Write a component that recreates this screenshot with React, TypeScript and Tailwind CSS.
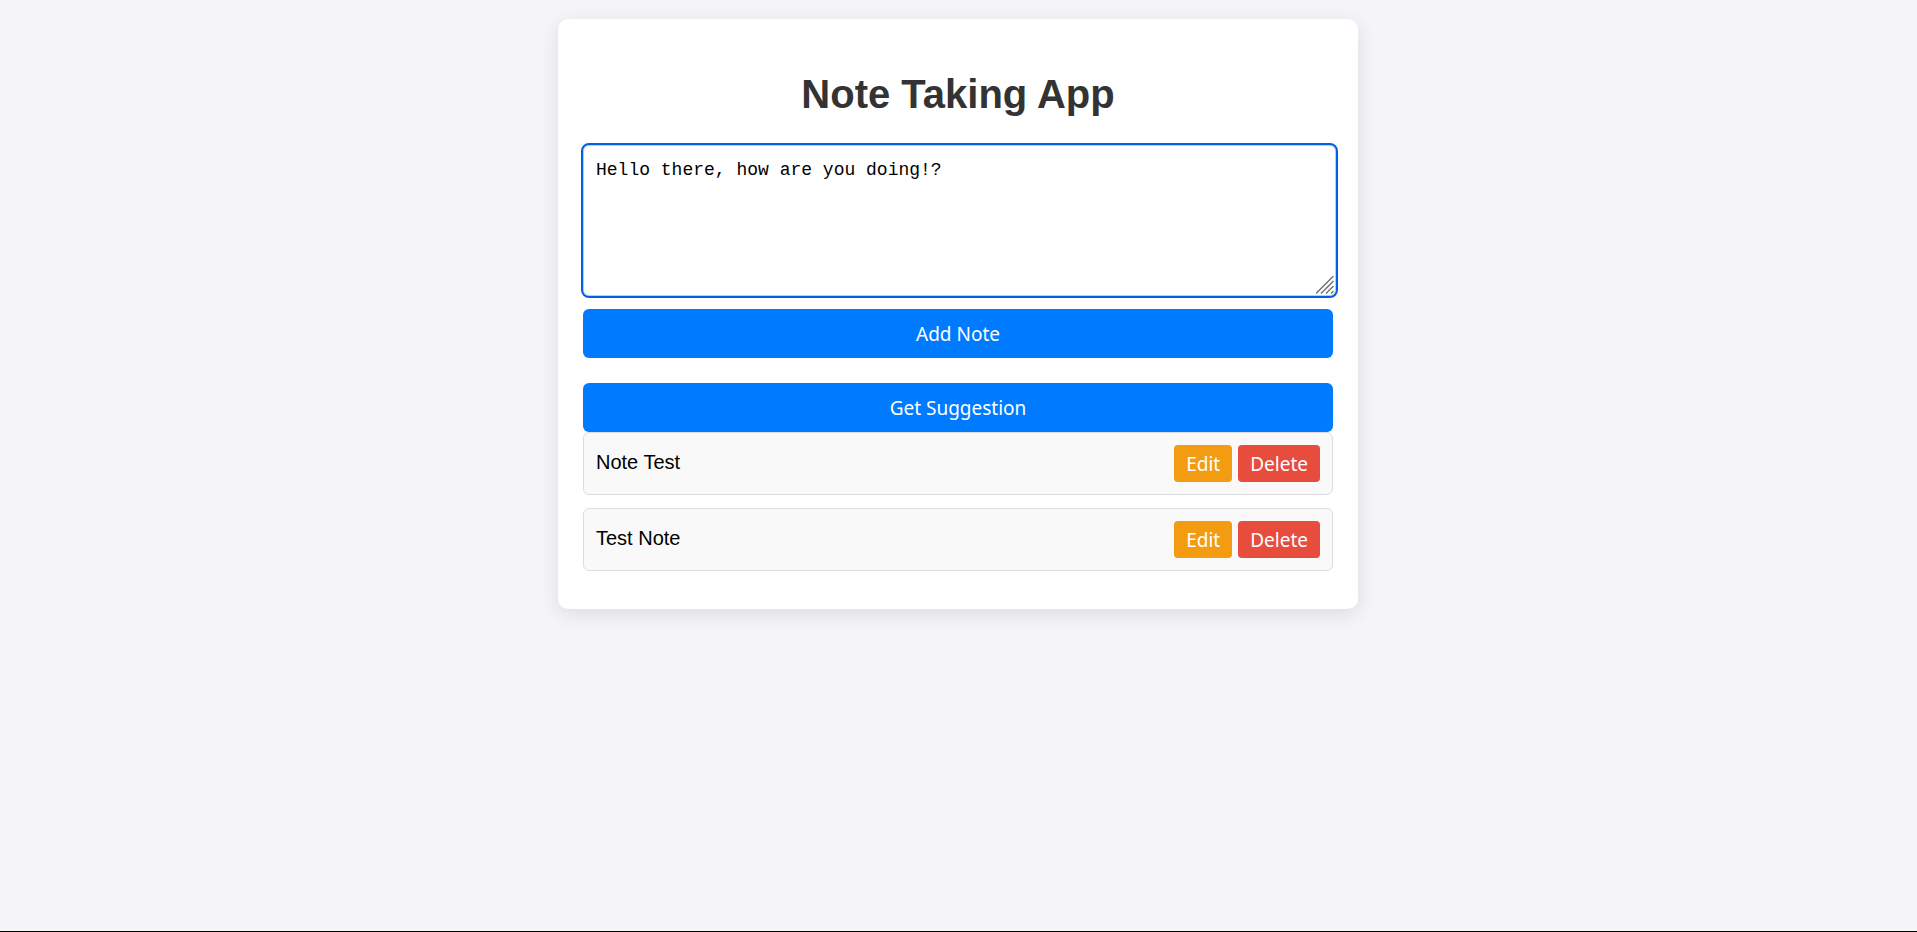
import { useState } from "react";

const initialNotes = ["Note Test", "Test Note"];

const primaryButton =
  "block h-[49px] w-full cursor-pointer rounded-md bg-[#007bff] font-['Noto_Sans',sans-serif] text-[19px] leading-6 text-white";
const smallButton =
  "h-[37px] cursor-pointer rounded px-3 font-['Noto_Sans',sans-serif] text-[19px] leading-6 text-white";

export default function App() {
  const [notes, setNotes] = useState(initialNotes);
  const [draft, setDraft] = useState("Hello there, how are you doing!?");

  return (
    <div className="min-h-screen border-b border-black bg-[#f4f4f9] pt-[19px] pr-px font-['Liberation_Sans',Arial,sans-serif] text-xl text-black">
      <main className="mx-auto max-w-[800px] rounded-[10px] bg-white px-[25px] pt-[52px] pb-[38px] shadow-[0_5px_19px_rgba(0,0,0,0.1)]">
        <h1 className="text-center text-[40px] leading-[46px] font-bold text-[#333]">Note Taking App</h1>
        <div className="relative mt-7 -mr-[3px]">
          <textarea
            aria-label="Note"
            value={draft}
            onChange={(e) => setDraft(e.target.value)}
            className="block h-[151px] w-full resize-none rounded-md border border-[#ccc] bg-white p-3 font-['Liberation_Mono',monospace] text-lg leading-6 outline-2 outline-[#0060e6]"
          />
          <svg
            aria-hidden="true"
            viewBox="0 0 18 18"
            className="pointer-events-none absolute right-[2px] bottom-[2px] size-[18px]"
            fill="none"
            stroke="#6b6b6b"
            strokeWidth="1.3"
          >
            <path d="M0 17.5 17.5 0M5 17.5 17.5 5M10 17.5 17.5 10M15 17.5 17.5 15" />
          </svg>
        </div>
        <button
          type="button"
          className={`mt-[13px] ${primaryButton}`}
          onClick={() => draft && setNotes([...notes, draft])}
        >
          Add Note
        </button>
        <button type="button" className={`mt-[25px] ${primaryButton}`}>
          Get Suggestion
        </button>
        <ul className="flex flex-col gap-[13px]">
          {notes.map((note, i) => (
            <li
              key={i}
              className="flex items-start justify-between rounded-md border border-[#ddd] bg-[#f9f9f9] p-3 leading-[35px]"
            >
              <span>{note}</span>
              <div className="flex gap-[6px]">
                <button type="button" className={`bg-[#f39c12] ${smallButton}`} onClick={() => setDraft(note)}>
                  Edit
                </button>
                <button
                  type="button"
                  className={`bg-[#e74c3c] ${smallButton}`}
                  onClick={() => setNotes(notes.filter((_, j) => j !== i))}
                >
                  Delete
                </button>
              </div>
            </li>
          ))}
        </ul>
      </main>
    </div>
  );
}
